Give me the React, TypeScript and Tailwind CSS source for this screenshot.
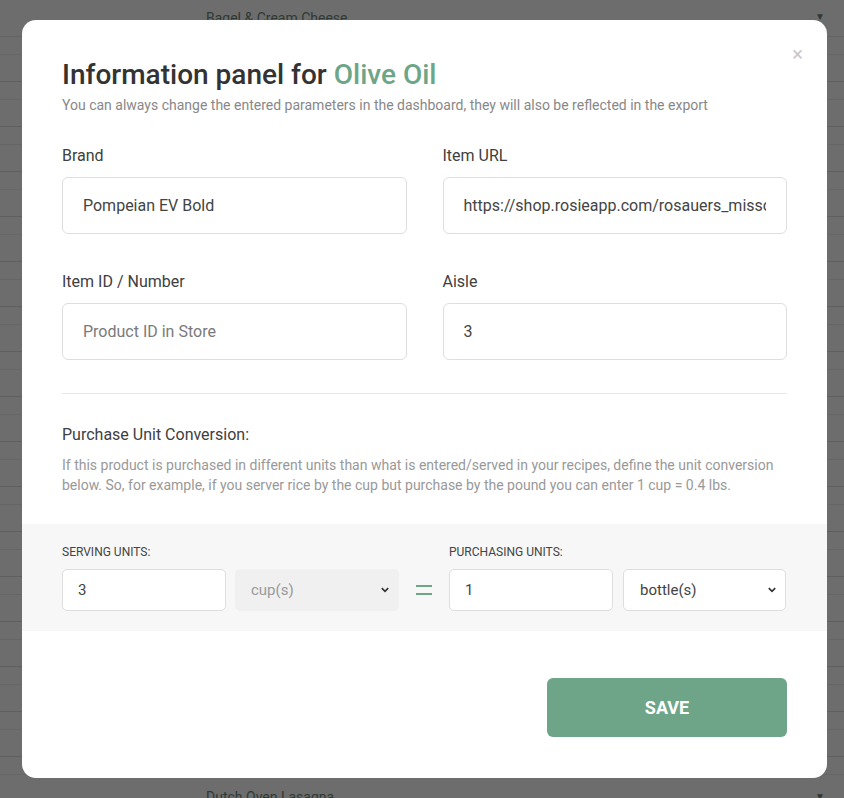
import React from "react";

const font = { fontFamily: "Roboto, 'Liberation Sans', sans-serif" };

function BackgroundRows() {
  const rows = Array.from({ length: 17 });
  return (
    <div className="absolute inset-0 overflow-hidden bg-[#6d6d6d]">
      <div className="h-[37px] border-b border-[#626262] relative">
        <span className="absolute left-[206px] top-[8px] text-[14px] text-[#2f3a34]">Bagel &amp; Cream Cheese</span>
        <span className="absolute left-[815px] top-[9px] text-[10px] text-[#2f3a34]">▼</span>
      </div>
      {rows.map((_, i) => (
        <div key={i}>
          <div className="h-[18px] border-b border-[#666666]" />
          <div className="h-[27px] border-b border-[#5f5f5f] relative">
            {i === 16 && (
              <>
                <span className="absolute left-[206px] top-[12px] text-[14px] text-[#2f3a34]">Dutch Oven Lasagna</span>
                <span className="absolute left-[815px] top-[14px] text-[10px] text-[#2f3a34]">▼</span>
              </>
            )}
          </div>
        </div>
      ))}
    </div>
  );
}

function Field({ label, value, placeholder }: { label: string; value?: string; placeholder?: string }) {
  return (
    <div className="flex flex-col">
      <label className="text-[16px] font-normal text-[#404040] leading-[20px] mb-[11px]">{label}</label>
      <input
        readOnly
        value={value ?? ""}
        placeholder={placeholder}
        className="h-[57px] w-full rounded-[6px] border border-[#dedede] bg-white px-5 text-[16px] text-[#444] placeholder:text-[#7a7a7a] outline-none"
      />
    </div>
  );
}

function Chevron() {
  return (
    <svg width="8" height="6" viewBox="0 0 8 6" className="absolute right-[10px] top-1/2 -translate-y-1/2">
      <path d="M0.8 1.2 L4 4.4 L7.2 1.2" fill="none" stroke="#333" strokeWidth="1.7" />
    </svg>
  );
}

function UnitSelect({ value, disabled, w }: { value: string; disabled?: boolean; w: string }) {
  return (
    <div className={"relative " + w}>
      <select
        disabled={disabled}
        defaultValue={value}
        className={
          disabled
            ? "h-[42px] w-full appearance-none rounded-[5px] bg-[#eff0ef] pl-[16px] text-[15px] text-[#9a9a9a] outline-none"
            : "h-[42px] w-full appearance-none rounded-[5px] border border-[#dedede] bg-white pl-[16px] text-[15px] text-[#444] outline-none"
        }
        style={font}
      >
        <option>{value}</option>
      </select>
      <Chevron />
    </div>
  );
}

function NumInput({ value }: { value: string }) {
  return (
    <input
      readOnly
      value={value}
      className="h-[42px] w-[164px] rounded-[5px] border border-[#dedede] bg-white px-[15px] text-[15px] text-[#444] outline-none"
      style={font}
    />
  );
}

export default function App() {
  return (
    <div className="relative w-[844px] h-[798px] overflow-hidden" style={font}>
      <BackgroundRows />
      <div className="absolute left-[22px] top-[20px] w-[805px] h-[758px] rounded-[14px] bg-white">
        <button className="absolute right-[24px] top-[24px] text-[20px] leading-none text-[#c8c8c8]">×</button>
        <div className="px-10 pt-[38px]">
          <h1 className="text-[28px] leading-[34px] font-medium text-[#333]">
            Information panel for <span className="text-[#6da587]">Olive Oil</span>
          </h1>
          <p className="mt-[4px] text-[14px] leading-[18px] text-[#888]">
            You can always change the entered parameters in the dashboard, they will also be reflected in the export
          </p>
          <div className="mt-[32px] grid grid-cols-2 gap-x-9 gap-y-[38px]">
            <Field label="Brand" value="Pompeian EV Bold" />
            <Field label="Item URL" value="https://shop.rosieapp.com/rosauers_missoula/product/12345" />
            <Field label="Item ID / Number" placeholder="Product ID in Store" />
            <Field label="Aisle" value="3" />
          </div>
          <div className="mt-[33px] border-t border-[#e8e8e8]" />
          <h2 className="mt-[31px] text-[16px] leading-[20px] font-normal text-[#404040]">Purchase Unit Conversion:</h2>
          <p className="mt-[10px] text-[14px] leading-[20px] text-[#999]">
            If this product is purchased in different units than what is entered/served in your recipes, define the unit conversion below. So, for example, if you server rice by the cup but purchase by the pound you can enter 1 cup = 0.4 lbs.
          </p>
        </div>
        <div className="mt-[29px] bg-[#f6f7f6] px-10 pt-[21px] h-[107px]">
          <div className="flex items-end">
            <div className="flex flex-col">
              <span className="text-[12px] leading-[14px] text-[#444] mb-[10px]">SERVING UNITS:</span>
              <div className="flex gap-[9px]">
                <NumInput value="3" />
                <UnitSelect value="cup(s)" disabled w="w-[164px]" />
              </div>
            </div>
            <div className="w-[50px] h-[42px] flex items-center justify-center">
              <div className="flex flex-col gap-[6px]">
                <div className="w-[16px] h-[2px] bg-[#6da587]" />
                <div className="w-[16px] h-[2px] bg-[#6da587]" />
              </div>
            </div>
            <div className="flex flex-col">
              <span className="text-[12px] leading-[14px] text-[#444] mb-[10px]">PURCHASING UNITS:</span>
              <div className="flex gap-[10px]">
                <NumInput value="1" />
                <UnitSelect value="bottle(s)" w="w-[163px]" />
              </div>
            </div>
          </div>
        </div>
        <div className="flex justify-end px-10 pt-[47px]">
          <button className="h-[59px] w-[240px] rounded-[6px] bg-[#6ea589] text-[18px] font-bold text-white">SAVE</button>
        </div>
      </div>
    </div>
  );
}
